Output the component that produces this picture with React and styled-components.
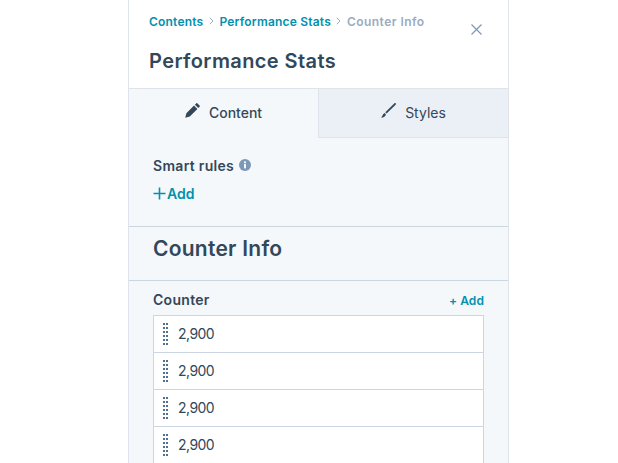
import React from "react";
import styled, { createGlobalStyle } from "styled-components";

const GlobalStyle = createGlobalStyle`
  html, body {
    margin: 0;
    height: 100%;
    background: #fff;
    overflow: hidden;
  }
  * {
    box-sizing: border-box;
  }
`;

const font = `Inter, "Noto Sans", sans-serif`;

const Page = styled.div`
  height: 463px;
  display: flex;
  padding-left: 128px;
  font-family: ${font};
  color: #33475b;
`;

const Panel = styled.div`
  width: 381px;
  height: 463px;
  overflow: hidden;
  border-left: 1px solid #dfe3eb;
  border-right: 1px solid #dfe3eb;
  background: #f5f8fa;
`;

const Header = styled.header`
  position: relative;
  height: 88px;
  background: #fff;
  padding: 12px 20px 0;
`;

const Crumbs = styled.nav`
  display: flex;
  align-items: center;
  height: 18px;
  font-size: 12px;
  font-weight: 600;
  letter-spacing: 0.2px;
`;

const Crumb = styled.span`
  color: ${(p) => (p.$current ? "#99acc2" : "#0091ae")};
  letter-spacing: ${(p) => (p.$current ? "0.45px" : "inherit")};
`;

const Chevron = styled.svg`
  width: 5px;
  height: 8px;
  margin: 0 5.5px;
  fill: none;
  stroke: #99acc2;
  stroke-width: 1;
`;

const CloseButton = styled.svg`
  position: absolute;
  top: 24px;
  right: 26px;
  width: 11px;
  height: 11px;
  stroke: #7c98b6;
  stroke-width: 1.2;
`;

const Title = styled.h1`
  margin: 18px 0 0;
  font-size: 20px;
  line-height: 26px;
  font-weight: 600;
  letter-spacing: 0.4px;
`;

const Tabs = styled.div`
  display: flex;
  height: 50px;
  border-top: 1px solid #dfe3eb;
`;

const Tab = styled.div`
  flex: 1;
  display: flex;
  align-items: center;
  justify-content: center;
  gap: 9px;
  padding-bottom: 2px;
  font-size: 14px;
  font-weight: ${(p) => (p.$active ? 500 : 400)};
  background: ${(p) => (p.$active ? "#f5f8fa" : "#eaf0f6")};
  border-left: ${(p) => (p.$active ? "none" : "1px solid #dfe3eb")};
  border-bottom: ${(p) => (p.$active ? "none" : "1px solid #dfe3eb")};
`;

const TabIcon = styled.svg`
  width: 15px;
  height: 15px;
  margin-top: -4px;
  fill: #33475b;
`;

const Section = styled.section`
  padding: ${(p) => p.$padding};
  border-bottom: ${(p) => (p.$plain ? "none" : "1px solid #cbd6e2")};
`;

const LabelRow = styled.div`
  display: flex;
  align-items: center;
  gap: 5px;
`;

const Label = styled.span`
  font-size: 14px;
  font-weight: 600;
  line-height: 20px;
  letter-spacing: 0.3px;
`;

const InfoIcon = styled.svg`
  width: 12px;
  height: 12px;
  margin-top: -2px;
`;

const AddLink = styled.div`
  display: flex;
  align-items: center;
  margin-top: 7px;
  margin-bottom: 1px;
  height: 20px;
  gap: 1px;
  font-size: 14px;
  font-weight: 600;
  color: #0091ae;
`;

const PlusIcon = styled.svg`
  width: 13px;
  height: 13px;
  stroke: #0091ae;
  stroke-width: 1.6;
`;

const SectionTitle = styled.h2`
  margin: 0;
  font-size: 21px;
  line-height: 28px;
  font-weight: 600;
  letter-spacing: 0.25px;
`;

const FieldHead = styled.div`
  display: flex;
  justify-content: space-between;
  align-items: center;
  height: 20px;
  margin-bottom: 5px;
`;

const SmallAdd = styled.span`
  font-size: 12px;
  font-weight: 600;
  letter-spacing: 0.1px;
  color: #0091ae;
`;

const List = styled.div`
  border: 1px solid #cbd6e2;
  border-bottom: none;
  background: #fff;
`;

const Row = styled.div`
  display: flex;
  align-items: center;
  height: 37px;
  padding-left: 9px;
  gap: 10px;
  font-size: 14px;
  font-weight: 400;
  letter-spacing: -0.55px;
  border-bottom: 1px solid #cbd6e2;
`;

const RowText = styled.span`
  margin-top: -1px;
`;

const Grip = styled.svg`
  width: 5px;
  height: 22px;
  fill: #516f90;
`;

const gripDots = Array.from({ length: 6 }, (_, i) => i);
const rows = [0, 1, 2, 3];

function DragHandle() {
  return (
    <Grip viewBox="0 0 5 22">
      {gripDots.map((i) => (
        <g key={i}>
          <rect x="0" y={i * 4} width="2" height="2" />
          <rect x="3" y={i * 4} width="2" height="2" />
        </g>
      ))}
    </Grip>
  );
}

function App() {
  return (
    <Page>
      <GlobalStyle />
      <Panel>
        <Header>
          <Crumbs>
            <Crumb>Contents</Crumb>
            <Chevron viewBox="0 0 5 8">
              <path d="M0.8 0.8 L4 4 L0.8 7.2" />
            </Chevron>
            <Crumb>Performance Stats</Crumb>
            <Chevron viewBox="0 0 5 8">
              <path d="M0.8 0.8 L4 4 L0.8 7.2" />
            </Chevron>
            <Crumb $current>Counter Info</Crumb>
          </Crumbs>
          <CloseButton viewBox="0 0 11 11">
            <path d="M0.5 0.5 L10.5 10.5 M10.5 0.5 L0.5 10.5" />
          </CloseButton>
          <Title>Performance Stats</Title>
        </Header>
        <Tabs>
          <Tab $active>
            <TabIcon viewBox="0 0 15 15">
              <path d="M11.2 0.4 C11.6 0 12.1 0 12.5 0.4 L14.6 2.5 C15 2.9 15 3.4 14.6 3.8 L13.3 5.1 L9.9 1.7 Z M9 2.6 L12.4 6 L4.8 13.6 L0.2 14.8 L1.4 10.2 Z" />
            </TabIcon>
            Content
          </Tab>
          <Tab>
            <TabIcon viewBox="0 0 15 15">
              <path d="M13.5 0.3 C14 -0.1 14.6 0 14.8 0.5 C15 1 14.9 1.3 14.6 1.7 L5.6 10.6 L4.3 9.3 Z M3.6 10 L4.9 11.3 C4.6 13.4 2.6 14.6 0.2 14.8 C1.4 13.4 1.6 10.8 3.6 10 Z" />
            </TabIcon>
            Styles
          </Tab>
        </Tabs>
        <Section $padding="18px 24px 22px">
          <LabelRow>
            <Label>Smart rules</Label>
            <InfoIcon viewBox="0 0 12 12">
              <circle cx="6" cy="6" r="6" fill="#7c98b6" />
              <rect x="5" y="5" width="2" height="4.4" fill="#f5f8fa" />
              <rect x="5" y="2.4" width="2" height="1.8" fill="#f5f8fa" />
            </InfoIcon>
          </LabelRow>
          <AddLink>
            <PlusIcon viewBox="0 0 13 13">
              <path d="M6.5 0.5 V12.5 M0.5 6.5 H12.5" />
            </PlusIcon>
            Add
          </AddLink>
        </Section>
        <Section $padding="8px 24px 17px">
          <SectionTitle>Counter Info</SectionTitle>
        </Section>
        <Section $plain $padding="9px 24px 0">
          <FieldHead>
            <Label>Counter</Label>
            <SmallAdd>+ Add</SmallAdd>
          </FieldHead>
          <List>
            {rows.map((r) => (
              <Row key={r}>
                <DragHandle />
                <RowText>2,900</RowText>
              </Row>
            ))}
          </List>
        </Section>
      </Panel>
    </Page>
  );
}

export default App;
